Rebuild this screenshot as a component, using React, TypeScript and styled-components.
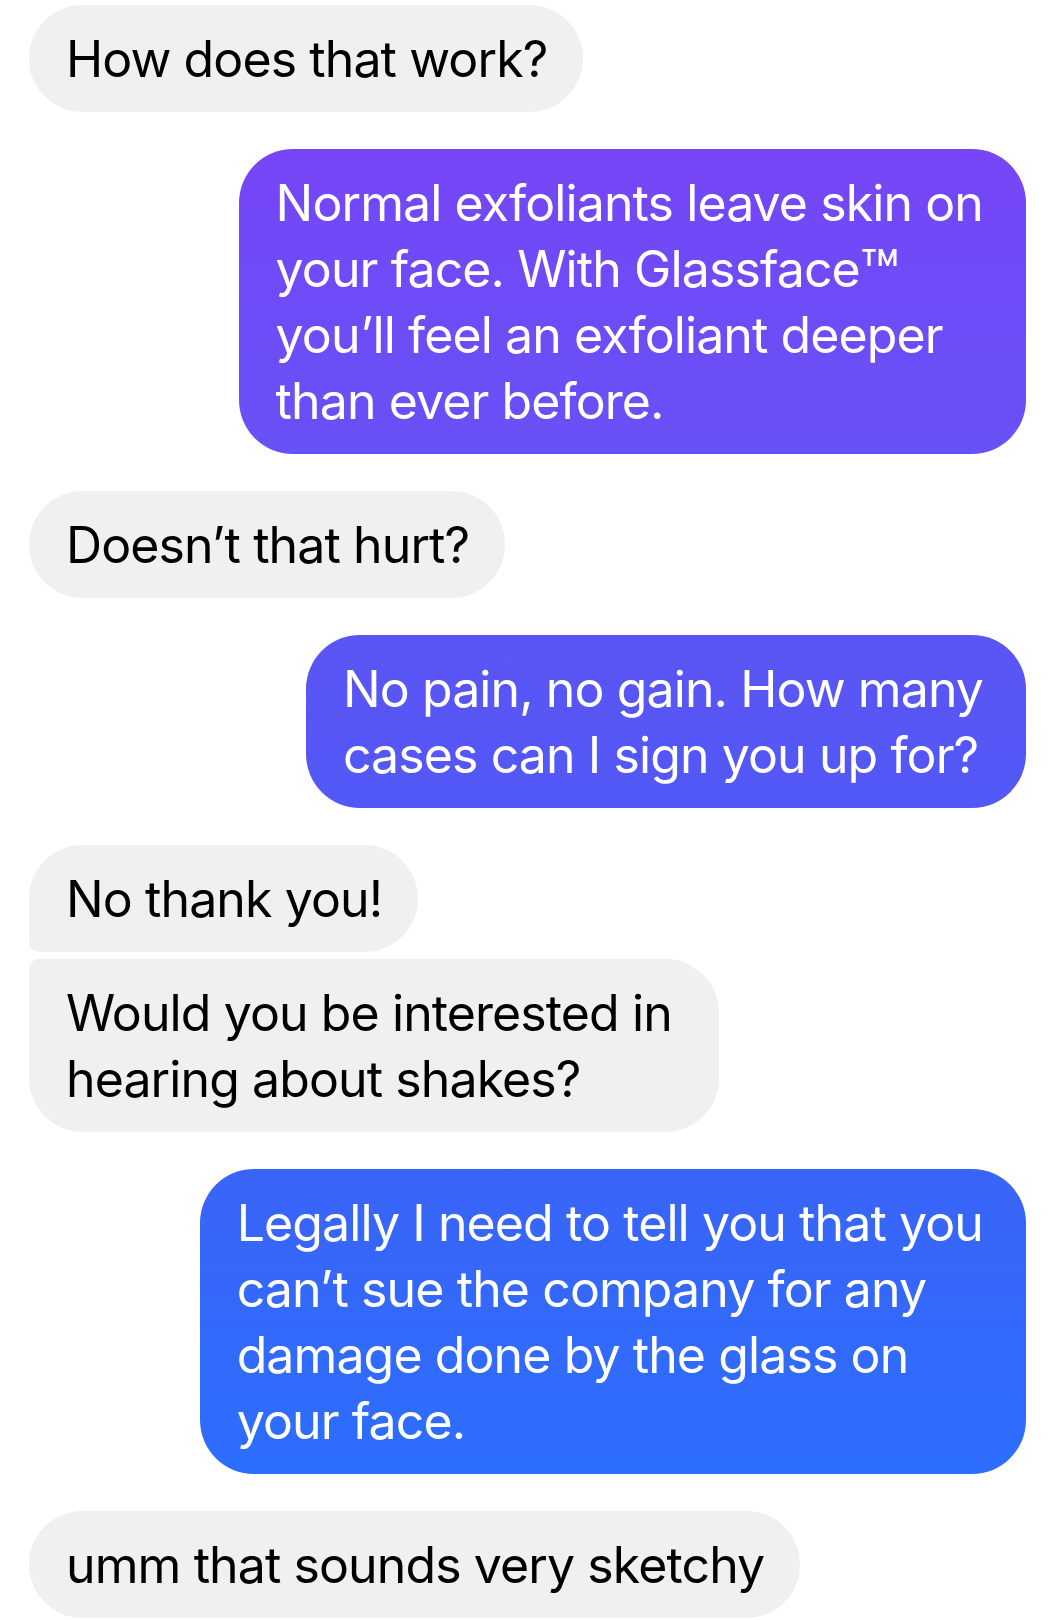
import React from "react";
import styled, { createGlobalStyle, css } from "styled-components";

const GlobalStyle = createGlobalStyle`
  html, body {
    margin: 0;
    padding: 0;
    background: #ffffff;
  }
  body {
    font-family: Inter, "Noto Sans", "Liberation Sans", sans-serif;
    -webkit-font-smoothing: antialiased;
  }
`;

type Side = "in" | "out";
type Corner = "single" | "top" | "bottom";

interface Message {
  side: Side;
  lines: string[];
  corner?: Corner;
  tight?: boolean;
}

const messages: Message[] = [
  { side: "in", lines: ["How does that work?"] },
  {
    side: "out",
    lines: [
      "Normal exfoliants leave skin on",
      "your face. With Glassface™",
      "you’ll feel an exfoliant deeper",
      "than ever before.",
    ],
  },
  { side: "in", lines: ["Doesn’t that hurt?"] },
  {
    side: "out",
    lines: ["No pain, no gain. How many", "cases can I sign you up for?"],
  },
  { side: "in", lines: ["No thank you!"], corner: "top" },
  {
    side: "in",
    lines: ["Would you be interested in", "hearing about shakes?"],
    corner: "bottom",
    tight: true,
  },
  {
    side: "out",
    lines: [
      "Legally I need to tell you that you",
      "can’t sue the company for any",
      "damage done by the glass on",
      "your face.",
    ],
  },
  { side: "in", lines: ["umm that sounds very sketchy"] },
];

// the ™ sign in the screenshot is drawn larger than Inter's
function renderLine(text: string) {
  const parts = text.split("™");
  return parts.map((part, i) => (
    <React.Fragment key={i}>
      {part}
      {i < parts.length - 1 && <Trademark>™</Trademark>}
    </React.Fragment>
  ));
}

export default function App() {
  return (
    <>
      <GlobalStyle />
      <Thread>
        {messages.map((m, i) => (
          <Row key={i} $side={m.side} $tight={m.tight}>
            <Bubble
              $side={m.side}
              $corner={m.corner ?? "single"}
              $multi={m.lines.length > 1}
            >
              {m.lines.map((line, j) => (
                <Line key={j}>{renderLine(line)}</Line>
              ))}
            </Bubble>
          </Row>
        ))}
      </Thread>
    </>
  );
}

const Thread = styled.div`
  display: flex;
  flex-direction: column;
  padding: 5px 24px 0 29px;
  height: 1620px;
  box-sizing: border-box;
  overflow: hidden;
`;

const Row = styled.div<{ $side: Side; $tight?: boolean }>`
  display: flex;
  justify-content: ${(p) => (p.$side === "out" ? "flex-end" : "flex-start")};
  margin-top: ${(p) => (p.$tight ? "7px" : "37px")};

  &:first-child {
    margin-top: 0;
  }
`;

const Bubble = styled.div<{ $side: Side; $corner: Corner; $multi: boolean }>`
  box-sizing: border-box;
  padding: 21px ${(p) => (p.$multi ? "47px" : "36px")} 20px 37px;
  border-radius: 54px;
  font-size: 50px;
  line-height: 66px;
  letter-spacing: -0.9px;

  ${(p) =>
    p.$side === "out"
      ? css`
          color: #ffffff;
          padding-right: 43px;
          background-image: linear-gradient(
            180deg,
            #7b41f8 0%,
            #7645f7 9%,
            #6752f6 28%,
            #5756f5 44%,
            #3a64f8 72%,
            #2c6efc 91%,
            #2872fd 100%
          );
          background-attachment: fixed;
        `
      : css`
          color: #000000;
          background: #f0f0f0;
        `}

  ${(p) =>
    p.$corner === "top" &&
    css`
      border-bottom-left-radius: 10px;
    `}

  ${(p) =>
    p.$corner === "bottom" &&
    css`
      border-top-left-radius: 10px;
    `}
`;

const Line = styled.span`
  display: block;
  white-space: nowrap;
`;

const Trademark = styled.span`
  font-size: 1.3em;
  line-height: 0;
  vertical-align: -0.14em;
  letter-spacing: -2px;
`;
